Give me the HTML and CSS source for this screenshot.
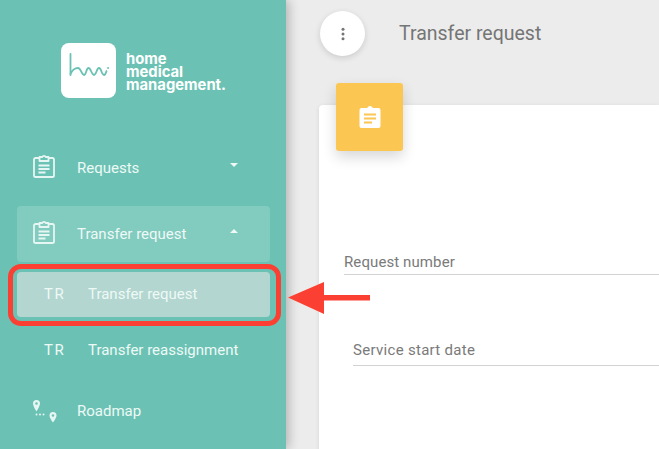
FILE: index.html
```html
<!DOCTYPE html>
<html lang="en">
<head>
<meta charset="utf-8">
<title>Transfer request</title>
<link rel="stylesheet" href="styles.css">
</head>
<body>
<div class="app">
  <aside class="sidebar">
    <div class="brand">
      <div class="brand-mark">
        <svg width="40" height="26" viewBox="0 0 40 26" fill="none" stroke="#6bc2b4" stroke-width="1.800" stroke-linecap="round" stroke-linejoin="round"><path d="M1.500 1v21"/><path d="M1.500 21C3.500 16.500 6 15 9 15c3 0 3.500 7 6 7s2-7 4.500-7 3 7 5.500 7 2.500-7 5-7 2.500 7 5 7c1.500 0 2-2 2.500-4"/><path d="M39 15h.2"/></svg>
      </div>
      <div class="brand-name">home<br>medical<br>management.</div>
    </div>
    <nav class="nav">
      <div class="nav-item first">
        <svg class="nav-icon" width="24" height="24" viewBox="0 0 24 24" fill="none" stroke="#e6f6f3" stroke-width="1.800" stroke-linejoin="round"><path d="M7.500 4H3.600A1.600 1.600 0 0 0 2 5.600v15.800A1.600 1.600 0 0 0 3.600 23h16.800a1.600 1.600 0 0 0 1.600-1.600V5.600A1.600 1.600 0 0 0 20.400 4h-3.900"/><path d="M7.500 7V3h2.800a1.800 1.800 0 0 1 3.400 0h2.800v4z"/><path d="M6.500 11.500h11M6.500 15h11M6.500 18.500h7"/></svg>
        <span class="nav-label">Requests</span>
        <span class="caret down"></span>
      </div>
      <div class="nav-item open">
        <svg class="nav-icon" width="24" height="24" viewBox="0 0 24 24" fill="none" stroke="#e6f6f3" stroke-width="1.800" stroke-linejoin="round"><path d="M7.500 4H3.600A1.600 1.600 0 0 0 2 5.600v15.800A1.600 1.600 0 0 0 3.600 23h16.800a1.600 1.600 0 0 0 1.600-1.600V5.600A1.600 1.600 0 0 0 20.400 4h-3.900"/><path d="M7.500 7V3h2.800a1.800 1.800 0 0 1 3.400 0h2.800v4z"/><path d="M6.500 11.500h11M6.500 15h11M6.500 18.500h7"/></svg>
        <span class="nav-label">Transfer request</span>
        <span class="caret up"></span>
      </div>
      <div class="sub-item active"><span class="sub-abbr">TR</span><span>Transfer request</span></div>
      <div class="sub-item second"><span class="sub-abbr">TR</span><span>Transfer reassignment</span></div>
      <div class="nav-item roadmap">
        <svg class="nav-icon" width="28" height="26" viewBox="0 0 28 26" fill="#e6f6f3"><path fill-rule="evenodd" d="M5.500 1A3.500 3.500 0 0 0 2 4.500C2 7 5.500 12.500 5.500 12.500S9 7 9 4.500A3.500 3.500 0 0 0 5.500 1zm0 2.200a1.300 1.300 0 1 1 0 2.600 1.300 1.300 0 0 1 0-2.600z"/><path fill-rule="evenodd" d="M22 13a3.500 3.500 0 0 0-3.500 3.500c0 2.500 3.500 7 3.500 7s3.500-4.500 3.500-7A3.500 3.500 0 0 0 22 13zm0 2.200a1.300 1.300 0 1 1 0 2.600 1.300 1.300 0 0 1 0-2.600z"/><circle cx="5.500" cy="15.500" r="1"/><circle cx="9" cy="15.500" r="1"/><circle cx="12.500" cy="15.500" r="1"/></svg>
        <span class="nav-label">Roadmap</span>
      </div>
    </nav>
  </aside>
  <main class="main">
    <header class="topbar">
      <button class="menu-btn" type="button" aria-label="Menu">
        <svg width="4" height="14" viewBox="0 0 4 14" fill="#757575"><circle cx="2" cy="2.200" r="1.500"/><circle cx="2" cy="7" r="1.500"/><circle cx="2" cy="11.800" r="1.500"/></svg>
      </button>
      <h1 class="page-title">Transfer request</h1>
    </header>
    <section class="card">
      <div class="card-badge">
        <svg width="24" height="24" viewBox="0 0 24 24" fill="#fff"><path d="M20.500 3h-5.700a3 3 0 0 0-5.600 0H3.500A2 2 0 0 0 1.500 5v16a2 2 0 0 0 2 2h17a2 2 0 0 0 2-2V5a2 2 0 0 0-2-2z"/><path d="M6 9.500h12M6 13.500h12M6 17.500h8" stroke="#fcc653" stroke-width="1.800"/></svg>
      </div>
      <div class="field field-number">Request number</div>
      <div class="field field-date">Service start date</div>
    </section>
  </main>
  <div class="callout"></div>
  <svg class="arrow" width="82" height="32" viewBox="0 0 82 32" fill="#fb4033"><path d="M0 15.500 36 0v13h46v5.500H36V32z"/></svg>
</div>
</body>
</html>
```
FILE: styles.css
```css
* { box-sizing: border-box; }
html, body { margin: 0; height: 100%; overflow: hidden; }
body { font-family: Roboto, "Liberation Sans", sans-serif; background: #ececec; }
.app { position: relative; display: flex; width: 659px; height: 449px; overflow: hidden; }

.sidebar { flex: 0 0 286px; background: #6bc2b4; box-shadow: 3px 0 10px rgba(0,0,0,.24); z-index: 1; }
.brand { display: flex; align-items: center; gap: 10px; padding: 43px 0 0 61px; }
.brand-mark { display: flex; align-items: center; justify-content: center; width: 55px; height: 55px; background: #fff; border-radius: 8px; }
.brand-mark svg { margin-bottom: 9px; }
.brand-name { margin-top: 4px; color: #fff; font-family: Inter, Roboto, sans-serif; font-size: 14.800px; font-weight: 700; line-height: 13px; }

.nav { display: flex; flex-direction: column; padding: 0 16px 0 17px; margin-top: 42px; color: #eef9f6; }
.nav-item { display: flex; align-items: center; height: 56px; padding-left: 15px; font-size: 15px; border-radius: 4px; }
.nav-icon { flex: none; margin: -4px 21px 0 0; }
.nav-label { flex: 1; }
.nav-item.open { margin-top: 10px; background: rgba(255,255,255,.15); }
.caret { width: 0; height: 0; margin-right: 32px; border-left: 4px solid transparent; border-right: 4px solid transparent; margin-top: -6px; }
.caret.down { border-top: 4px solid #eef9f6; }
.caret.up { border-bottom: 4px solid #eef9f6; }

.sub-item { display: flex; align-items: center; height: 45px; padding-left: 27px; font-size: 15px; border-radius: 4px; }
.sub-abbr { flex: 0 0 44px; letter-spacing: 1.500px; }
.sub-item.active { margin-top: 10px; padding-bottom: 2px; background: #b3d6d0; }
.sub-item.second { margin-top: 10px; }
.nav-item.roadmap { margin-top: 17px; height: 44px; padding-left: 14px; }
.roadmap .nav-icon { margin: 2px 18px 0 0; }

.main { flex: 1; min-width: 0; padding-left: 33px; }
.topbar { display: flex; align-items: center; height: 67px; }
.menu-btn { display: flex; align-items: center; justify-content: center; flex: none; width: 45px; height: 45px; margin-left: 1px; padding: 0; border: 0; border-radius: 50%; background: #fff; box-shadow: 0 2px 6px rgba(0,0,0,.14); }
.page-title { margin: 0 0 0 34px; color: #757575; font-size: 19.500px; font-weight: 400; }

.card { position: relative; height: 360px; margin-top: 38px; padding: 146px 0 0 25px; background: #fff; border-radius: 4px 0 0 0; box-shadow: 0 1px 4px rgba(0,0,0,.1); }
.card-badge { position: absolute; left: 17px; top: -22px; display: flex; align-items: center; justify-content: center; width: 67px; height: 68px; background: #fcc653; border-radius: 3px; box-shadow: 0 6px 14px rgba(0,0,0,.16); }
.field { height: 24px; color: #7a7a7a; font-size: 15px; line-height: 22px; letter-spacing: .1px; border-bottom: 1px solid #d2d2d2; }
.field-date { margin-top: 64px; margin-left: 9px; height: 27px; letter-spacing: .3px; }

.callout { position: absolute; left: 8px; top: 264px; width: 273px; height: 62px; border: 5px solid #fb4033; border-radius: 13px; z-index: 2; }
.arrow { position: absolute; left: 288px; top: 282px; z-index: 2; }
```
